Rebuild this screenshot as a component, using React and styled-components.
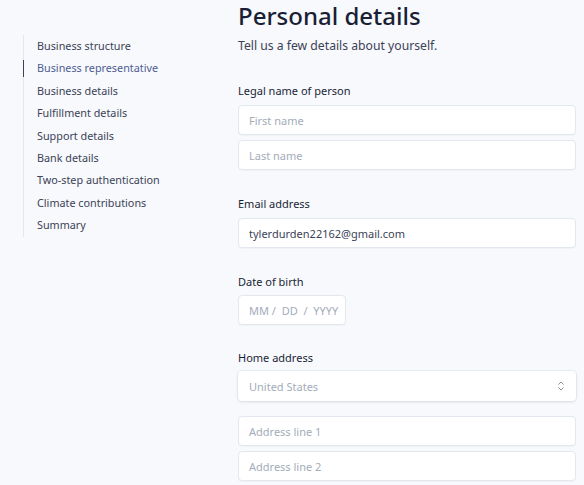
import styled, { createGlobalStyle } from "styled-components";

const GlobalStyle = createGlobalStyle`
    body {
        margin: 0;
        background: #f7f9fc;
        font-family: "Noto Sans", "Open Sans", sans-serif;
        color: #3c4257;
    }
`;

const Page = styled.div`
    display: flex;
    width: 584px;
    height: 485px;
    overflow: hidden;
    box-sizing: border-box;
`;

const Sidebar = styled.nav`
    width: 238px;
    flex-shrink: 0;
    padding: 35px 0 0 23px;
    box-sizing: border-box;
`;

const NavList = styled.ul`
    list-style: none;
    margin: 0;
    padding: 0;
    border-left: 1px solid #e3e8ee;
`;

const NavItem = styled.li`
    position: relative;
    font-size: 10.8px;
    line-height: 22.4px;
    padding-left: 13px;
    color: ${(p) => (p.$active ? "#4f5b93" : "#3c4257")};

    &::before {
        content: "";
        display: ${(p) => (p.$active ? "block" : "none")};
        position: absolute;
        left: -1px;
        top: 3px;
        bottom: 3px;
        width: 1px;
        background: #3c4257;
    }
`;

const Main = styled.main`
    flex: 1;
    padding-right: 8px;
    display: flex;
    flex-direction: column;
`;

const Title = styled.h1`
    margin: 0;
    font-size: 24px;
    line-height: 32px;
    font-weight: 500;
    color: #1a1f36;
`;

const Subtitle = styled.p`
    margin: 5px 0 0;
    font-size: 12.2px;
    line-height: 18px;
    color: #3c4257;
`;

const Section = styled.section`
    display: flex;
    flex-direction: column;
    gap: 5px;
    margin-top: ${(p) => p.$top || 26}px;
`;

const Label = styled.label`
    font-size: 11px;
    line-height: 16px;
    font-weight: 400;
    color: #1a1f36;
    margin-bottom: ${(p) => p.$after ?? 1}px;
`;

const Field = styled.div`
    height: 30px;
    width: ${(p) => p.$width || "100%"};
    box-sizing: border-box;
    background: #fff;
    border: 1px solid #e3e8ee;
    border-radius: 4px;
    box-shadow: 0 1px 1px rgba(0, 0, 0, 0.03);
    display: flex;
    align-items: center;
    justify-content: space-between;
    padding: 0 10px;
    font-size: 11px;
    white-space: pre;
    color: ${(p) => (p.$filled ? "#3c4257" : "#a3acb9")};
`;

const SelectField = styled(Field)`
    border-color: transparent;
    box-shadow: 0 0 0 1px rgba(60, 66, 87, 0.05), 0 1px 3px rgba(60, 66, 87, 0.12);
`;

const Gap = styled.div`
    height: ${(p) => p.$h}px;
`;

const Chevron = () => (
    <svg width="8" height="10" viewBox="0 0 8 10" fill="none">
        <path d="M1.5 3.5L4 1L6.5 3.5" stroke="#8792a2" strokeWidth="1" />
        <path d="M1.5 6.5L4 9L6.5 6.5" stroke="#8792a2" strokeWidth="1" />
    </svg>
);

const steps = [
    "Business structure",
    "Business representative",
    "Business details",
    "Fulfillment details",
    "Support details",
    "Bank details",
    "Two-step authentication",
    "Climate contributions",
    "Summary",
];

const App = () => {
    return (
        <>
            <GlobalStyle />
            <Page>
                <Sidebar>
                    <NavList>
                        {steps.map((step, i) => (
                            <NavItem key={step} $active={i === 1}>
                                {step}
                            </NavItem>
                        ))}
                    </NavList>
                </Sidebar>
                <Main>
                    <Title>Personal details</Title>
                    <Subtitle>Tell us a few details about yourself.</Subtitle>

                    <Section $top={28}>
                        <Label>Legal name of person</Label>
                        <Field>First name</Field>
                        <Field>Last name</Field>
                    </Section>

                    <Section>
                        <Label>Email address</Label>
                        <Field $filled>tylerdurden22162@gmail.com</Field>
                    </Section>

                    <Section>
                        <Label $after={0}>Date of birth</Label>
                        <Field $width="108px">MM /  DD  /  YYYY</Field>
                    </Section>

                    <Section $top={25}>
                        <Label $after={0}>Home address</Label>
                        <SelectField>
                            United States
                            <Chevron />
                        </SelectField>
                        <Gap $h={5} />
                        <Field>Address line 1</Field>
                        <Field>Address line 2</Field>
                    </Section>
                </Main>
            </Page>
        </>
    );
};

export default App;
